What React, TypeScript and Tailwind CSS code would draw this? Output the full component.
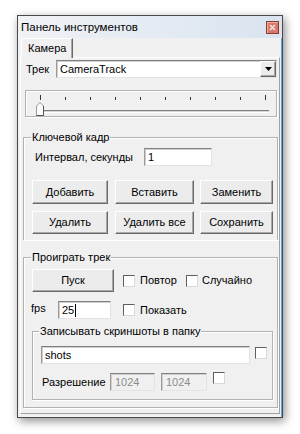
import React from "react";

const sunken =
  "border border-t-[#7f7f7f] border-l-[#9a9a9a] border-r-[#e3e3e3] border-b-[#e3e3e3] shadow-[inset_1px_1px_0_#cfcfcf]";
const raised =
  "border border-t-white border-l-white border-r-[#6a6a6a] border-b-[#6a6a6a] shadow-[inset_-1px_-1px_0_#a8a8a8] bg-[#ececec]";
const etched = "border-[#b2b2b2] shadow-[inset_1px_1px_0_#fff,1px_1px_0_#fff]";

function Check() {
  return (
    <div className="h-[12px] w-[12px] shrink-0 bg-white border border-t-[#5f5f5f] border-l-[#5f5f5f] border-r-[#d9d9d9] border-b-[#d9d9d9]" />
  );
}

function Btn({ label, w, h = "h-[24px]" }: { label: string; w: string; h?: string }) {
  return (
    <div className={`${w} ${h} ${raised} flex items-center justify-center`}>{label}</div>
  );
}

function GroupLabel({ text, ml = "ml-[7px]" }: { text: string; ml?: string }) {
  return (
    <div className={`-mt-[7px] ${ml} w-fit bg-[#f0f0f0] px-[1px] leading-[13px]`}>{text}</div>
  );
}

export default function App() {
  const ticks = Array.from({ length: 10 });

  return (
    <div className="min-h-[434px] w-[300px] bg-white pl-[17px] pt-[15px] font-['Liberation_Sans',Arial,sans-serif] text-[11px] leading-[13px] text-black">
      {/* Window */}
      <div className="flex h-[403px] w-[266px] flex-col border border-[#4a4a4a] bg-[#f0f0f0] shadow-[2px_3px_9px_rgba(0,0,0,0.45),inset_-1px_0_0_#5aa9e0]">
        {/* Title bar */}
        <div className="flex h-[22px] items-center justify-between bg-gradient-to-r from-[#f0f2f5] to-[#d9e4f0] pl-[3px] pr-[3px]">
          <span className="text-[11.5px]">Панель инструментов</span>
          <div className="flex h-[13px] w-[13px] items-center justify-center border border-[#8d3a2f] bg-[#d8786a] shadow-[inset_1px_1px_0_#eeb0a6]">
            <svg width="7" height="7" viewBox="0 0 7 7">
              <path d="M1 1 L6 6 M6 1 L1 6" stroke="#f4e4e0" strokeWidth="1.6" />
            </svg>
          </div>
        </div>

        <div className="flex flex-1 flex-col px-[2px] pb-[3px]">
          {/* Tab strip */}
          <div className="flex h-[19px] items-end">
            <div className="relative z-10 -mb-px ml-[1px] flex h-[20px] w-[52px] items-center border-l border-t border-r border-l-white border-t-white border-r-[#6a6a6a] bg-[#f0f0f0] pl-[6px] shadow-[inset_-1px_0_0_#a8a8a8]">
              Камера
            </div>
          </div>

          {/* Tab panel */}
          <div className="flex flex-1 flex-col border border-t-white border-l-white border-r-[#a0a0a0] border-b-[#a0a0a0]">
            {/* Track row */}
            <div className="mt-[2px] flex h-[18px] items-center">
              <span className="w-[35px] pl-[5px]">Трек</span>
              <div className={`flex h-[18px] w-[221px] items-center bg-white ${sunken}`}>
                <span className="flex-1 pl-[3px]">CameraTrack</span>
                <div className={`flex h-[16px] w-[16px] items-center justify-center ${raised}`}>
                  <svg width="7" height="4" viewBox="0 0 7 4">
                    <path d="M0 0 H7 L3.5 4 Z" fill="#000" />
                  </svg>
                </div>
              </div>
            </div>

            {/* Trackbar */}
            <div className={`ml-[4px] mt-[12px] flex h-[27px] w-[252px] flex-col border ${etched}`}>
              <div className="ml-[14px] mt-[4px] flex h-[5px] w-[226px] items-end justify-between">
                {ticks.map((_, i) => (
                  <div
                    key={i}
                    className={`w-px bg-[#333] ${i === 0 || i === 9 ? "h-[5px]" : "h-[3px]"}`}
                  />
                ))}
              </div>
              <div className="ml-[10px] mt-[2px] flex items-end">
                <svg width="8" height="14" viewBox="0 0 8 14" className="shrink-0">
                  <path d="M0.5 13.5 V4 L4 0.5 L7.5 4 V13.5 Z" fill="#fbfbfb" stroke="#9a9a9a" />
                  <path d="M7.5 4 V13.5 H0.5" fill="none" stroke="#555" />
                </svg>
                <div className="mb-[3px] h-[3px] w-[225px] border-t border-t-[#808080] border-b border-b-white bg-[#d4d4d4]" />
              </div>
            </div>

            {/* Keyframe group */}
            <div className={`ml-[2px] mt-[20px] h-[103px] w-[255px] border-l border-t border-r ${etched}`}>
              <GroupLabel text="Ключевой кадр" />
              <div className="mt-[4px] flex h-[18px] items-center">
                <span className="w-[120px] pl-[11px]">Интервал, секунды</span>
                <div className={`flex h-[18px] w-[68px] items-center bg-white pl-[3px] ${sunken}`}>1</div>
              </div>
              <div className="ml-[8px] mt-[14px] flex">
                <Btn label="Добавить" w="w-[76px]" />
                <div className="ml-[7px]">
                  <Btn label="Вставить" w="w-[79px]" />
                </div>
                <div className="ml-[6px]">
                  <Btn label="Заменить" w="w-[73px]" />
                </div>
              </div>
              <div className="ml-[8px] mt-[7px] flex">
                <Btn label="Удалить" w="w-[76px]" h="h-[23px]" />
                <div className="ml-[7px]">
                  <Btn label="Удалить все" w="w-[79px]" h="h-[23px]" />
                </div>
                <div className="ml-[6px]">
                  <Btn label="Сохранить" w="w-[73px]" h="h-[23px]" />
                </div>
              </div>
            </div>

            {/* Play group */}
            <div className={`ml-[2px] mt-[17px] h-[151px] w-[255px] border ${etched}`}>
              <GroupLabel text="Проиграть трек" />
              <div className="ml-[8px] mt-[5px] flex items-center">
                <Btn label="Пуск" w="w-[82px]" h="h-[23px]" />
                <div className="ml-[9px] flex w-[63px] items-center gap-[5px]">
                  <Check />
                  <span>Повтор</span>
                </div>
                <div className="flex items-center gap-[4px]">
                  <Check />
                  <span>Случайно</span>
                </div>
              </div>
              <div className="ml-[7px] mt-[9px] flex items-center">
                <span className="w-[27px] -mt-[3px]">fps</span>
                <div className={`flex h-[18px] w-[53px] items-center bg-white pl-[3px] ${sunken}`}>
                  25<span className="ml-px h-[13px] w-px bg-black" />
                </div>
                <div className="ml-[12px] flex items-center gap-[5px]">
                  <Check />
                  <span>Показать</span>
                </div>
              </div>

              {/* Screenshots group */}
              <div className={`ml-[8px] mt-[12px] h-[69px] w-[241px] border ${etched}`}>
                <GroupLabel text="Записывать скриншоты в папку" ml="ml-[6px]" />
                <div className="ml-[8px] mt-[8px] flex items-start">
                  <div className={`flex h-[18px] w-[209px] items-center bg-white pl-[3px] ${sunken}`}>shots</div>
                  <div className="ml-[5px] mt-[1px]">
                    <Check />
                  </div>
                </div>
                <div className="mt-[9px] flex items-start">
                  <span className="flex h-[18px] w-[77px] items-center pl-[9px]">Разрешение</span>
                  <div className={`flex h-[18px] w-[45px] items-center bg-[#f0f0f0] pl-[4px] text-[#8c8c8c] ${sunken}`}>1024</div>
                  <div className={`ml-[6px] flex h-[18px] w-[46px] items-center bg-[#f0f0f0] pl-[4px] text-[#8c8c8c] ${sunken}`}>1024</div>
                  <div className="ml-[6px] -mt-[1px]">
                    <Check />
                  </div>
                </div>
              </div>
            </div>
          </div>
        </div>
      </div>
    </div>
  );
}
